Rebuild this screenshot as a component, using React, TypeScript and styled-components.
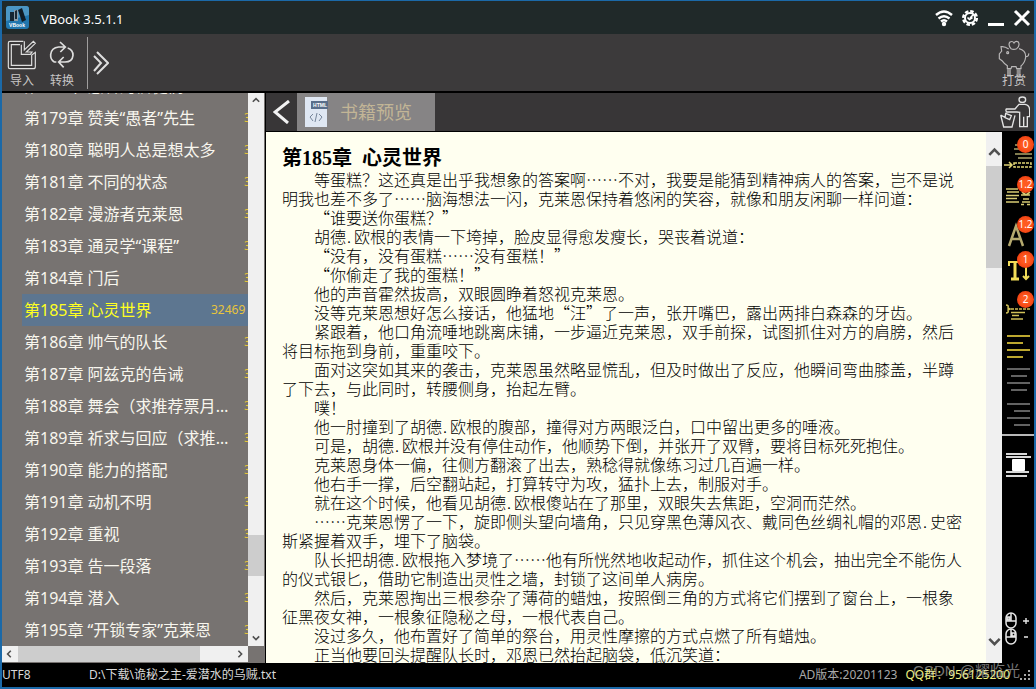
import React from "react";
import styled, { createGlobalStyle, css } from "styled-components";

const UI = '"Noto Sans", "Noto Sans CJK SC", sans-serif';

const GlobalStyle = createGlobalStyle`
  * { box-sizing: border-box; }
  body { margin: 0; background: #000; font-family: ${UI}; }
  button { padding: 0; border: 0; background: none; color: inherit; font: inherit; cursor: pointer; }
  svg { display: block; flex: none; }
`;

const Window = styled.div`
  height: 100vh;
  display: flex;
  flex-direction: column;
  border: 2px solid #1b69a8;
  border-top-width: 1px;
  background: #000;
  overflow: hidden;
`;

const TitleBar = styled.header`
  flex: none;
  height: 33px;
  display: flex;
  align-items: center;
  gap: 12px;
  padding: 0 3px 0 4px;
  background: #202929;
  color: #fff;
`;

const AppName = styled.h1`
  flex: 1;
  margin: 0;
  font-size: 13px;
  line-height: 20px;
  font-weight: 400;
  padding-top: 2px;
`;

const WindowButtons = styled.div`
  display: flex;
  align-items: center;
  gap: 8px;
`;

const Toolbar = styled.div`
  flex: none;
  height: 58px;
  display: flex;
  align-items: flex-start;
  background: #3c3a3b;
  border-bottom: 1px solid #000;
  color: #c8c6c6;
`;

const ToolButton = styled.button`
  width: 40px;
  padding-top: 6px;
  display: flex;
  flex-direction: column;
  align-items: center;
  gap: 3px;
  font-size: 12px;
  line-height: 16px;
`;

const MoreButton = styled.button`
  height: 52px;
  margin: 3px 0 0 5px;
  padding: 0 5px;
  border-left: 1px solid #a09e9e;
`;

const Spacer = styled.div`
  flex: 1;
`;

const DonateButton = styled(ToolButton)`
  position: relative;
  width: 40px;
`;

const DonateLabel = styled.span`
  position: absolute;
  left: 0;
  right: 0;
  top: 39px;
  text-align: center;
  font-size: 12px;
`;

const Body = styled.div`
  flex: 1;
  min-height: 0;
  display: flex;
`;

const Sidebar = styled.aside`
  flex: none;
  width: 264px;
  display: grid;
  grid-template-columns: 1fr 16px;
  grid-template-rows: 1fr 16px;
  padding: 0 1px 1px 0;
  background: #777371;
  border-right: 1px solid #000;
  border-top: 1px solid #000;
`;

const ListViewport = styled.nav`
  min-height: 0;
  min-width: 0;
  overflow: hidden;
`;

const ChapterList = styled.ul`
  list-style: none;
  margin: -23px 0 0 20px;
  padding: 0;
`;

const Chapter = styled.button<{ $active?: boolean }>`
  width: 100%;
  height: 32px;
  display: flex;
  align-items: center;
  padding-left: 2px;
  text-align: left;
  white-space: nowrap;
  font-size: 16px;
  line-height: 32px;
  color: #f8f6ee;
  ${(p) => p.$active && css`background: #5d7690; color: #ffff20;`}
`;

const ChapterName = styled.span<{ $active?: boolean }>`
  flex: none;
  width: ${(p) => (p.$active ? 187 : 206)}px;
  margin-right: ${(p) => (p.$active ? 0 : 14)}px;
  overflow: hidden;
  text-overflow: ellipsis;
`;

const Count = styled.span`
  flex: none;
  font-size: 12px;
  color: #e8c43c;
`;

const ScrollBar = styled.div<{ $horizontal?: boolean }>`
  flex: none;
  display: flex;
  flex-direction: ${(p) => (p.$horizontal ? "row" : "column")};
  ${(p) => (p.$horizontal ? "" : `width: 16px;`)}
  min-height: 0;
  background: #f0f0f0;
  color: #555;
`;

const ScrollArrow = styled.button<{ $tall?: boolean }>`
  flex: none;
  width: 16px;
  height: ${(p) => (p.$tall ? 34 : 16)}px;
  display: flex;
  align-items: center;
  justify-content: center;
  ${(p) => p.$tall && css`padding-top: 8px;`}
`;

const Track = styled.div<{ $before: number; $size: number; $after: number; $horizontal?: boolean }>`
  flex: 1;
  min-height: 0;
  display: grid;
  ${(p) =>
    p.$horizontal
      ? `grid-template-columns: ${p.$before}fr ${p.$size}fr ${p.$after}fr;`
      : `grid-template-rows: ${p.$before}fr ${p.$size}fr ${p.$after}fr;`}
`;

const Thumb = styled.div<{ $horizontal?: boolean }>`
  ${(p) => (p.$horizontal ? "grid-column: 2;" : "grid-row: 2;")}
  background: #cdcdcd;
`;

const Main = styled.main`
  flex: 1;
  min-width: 0;
  display: flex;
  flex-direction: column;
`;

const TabBar = styled.div`
  flex: none;
  height: 40px;
  display: flex;
  background: #383637;
  border-bottom: 1px solid #000;
  border-top: 1px solid #000;
`;

const BackButton = styled.button`
  width: 31px;
  display: flex;
  align-items: center;
  justify-content: center;
`;

const Tab = styled.button`
  width: 138px;
  display: flex;
  align-items: center;
  gap: 12px;
  padding-left: 8px;
  background: #868485;
  color: #c2b596;
  font-size: 18px;
  line-height: 24px;
`;

const TrashButton = styled.button`
  width: 38px;
  display: flex;
  align-items: center;
  justify-content: center;
`;

const Workspace = styled.div`
  flex: 1;
  min-height: 0;
  display: flex;
`;

const Paper = styled.article`
  flex: 1;
  min-width: 0;
  overflow: hidden;
  padding: 14px 20px 0 16px;
  background: #fffff0;
  color: #000;
  font-family: "Noto Sans CJK SC", sans-serif;
  font-weight: 300;
  text-spacing-trim: space-all;
`;

const ChapterTitle = styled.h2`
  margin: 0;
  font-family: "Liberation Serif", "Noto Sans CJK SC", serif;
  font-size: 20px;
  line-height: 24px;
  font-weight: 700;
  white-space: pre;
`;

const Paragraph = styled.p`
  margin: 0;
  text-indent: 32px;
  font-size: 16px;
  line-height: 19px;
`;

const Dot = styled.span`
  display: inline-block;
  width: 8px;
  text-indent: 1px;
`;

const Tools = styled.div`
  flex: none;
  width: 32px;
  display: flex;
  flex-direction: column;
  align-items: center;
  background: #000;
`;

const SideTool = styled.button<{ $height: number }>`
  position: relative;
  flex: none;
  width: 32px;
  height: ${(p) => p.$height}px;
`;

const Badge = styled.span`
  position: absolute;
  top: 4px;
  left: 15px;
  width: 17px;
  height: 17px;
  border-radius: 50%;
  background: radial-gradient(#ff5a20 30%, #e83208);
  color: #fff;
  font-size: 10px;
  line-height: 17px;
  text-align: center;
`;

const Divider = styled.hr`
  width: 100%;
  height: 2px;
  margin: 0;
  border: 0;
  background: #b8b8b8;
`;

const StatusBar = styled.footer`
  position: relative;
  flex: none;
  height: 24px;
  display: flex;
  align-items: center;
  background: #000;
  color: #d8d8d8;
  font-size: 12px;
  line-height: 24px;
  white-space: nowrap;
`;

const Encoding = styled.span`
  width: 87px;
`;

const FilePath = styled.span`
  flex: 1;
`;

const Version = styled.span`
  color: #a8a8a8;
  margin-right: 8px;
`;

const Group = styled.span`
  color: #f0f080;
  margin-right: 10px;
`;

const Watermark = styled.span`
  position: absolute;
  right: 14px;
  top: -4px;
  font-family: "Liberation Sans", "Noto Sans CJK SC", sans-serif;
  font-size: 15px;
  color: rgba(200, 200, 200, 0.6);
`;

type ChapterItem = [number, string];
const chapters: ChapterItem[] = [
  [178, "愚者的信徒们"],
  [179, "赞美“愚者”先生"],
  [180, "聪明人总是想太多"],
  [181, "不同的状态"],
  [182, "漫游者克莱恩"],
  [183, "通灵学“课程”"],
  [184, "门后"],
  [185, "心灵世界"],
  [186, "帅气的队长"],
  [187, "阿兹克的告诫"],
  [188, "舞会（求推荐票月票）"],
  [189, "祈求与回应（求推荐票）"],
  [190, "能力的搭配"],
  [191, "动机不明"],
  [192, "重视"],
  [193, "告一段落"],
  [194, "潜入"],
  [195, "“开锁专家”克莱恩"],
];

const paragraphs = [
  "等蛋糕？这还真是出乎我想象的答案啊……不对，我要是能猜到精神病人的答案，岂不是说明我也差不多了……脑海想法一闪，克莱恩保持着悠闲的笑容，就像和朋友闲聊一样问道：",
  "“谁要送你蛋糕？”",
  "胡德.欧根的表情一下垮掉，脸皮显得愈发瘦长，哭丧着说道：",
  "“没有，没有蛋糕……没有蛋糕！”",
  "“你偷走了我的蛋糕！”",
  "他的声音霍然拔高，双眼圆睁着怒视克莱恩。",
  "没等克莱恩想好怎么接话，他猛地“汪”了一声，张开嘴巴，露出两排白森森的牙齿。",
  "紧跟着，他口角流唾地跳离床铺，一步逼近克莱恩，双手前探，试图抓住对方的肩膀，然后将目标拖到身前，重重咬下。",
  "面对这突如其来的袭击，克莱恩虽然略显慌乱，但及时做出了反应，他瞬间弯曲膝盖，半蹲了下去，与此同时，转腰侧身，抬起左臂。",
  "噗！",
  "他一肘撞到了胡德.欧根的腹部，撞得对方两眼泛白，口中留出更多的唾液。",
  "可是，胡德.欧根并没有停住动作，他顺势下倒，并张开了双臂，要将目标死死抱住。",
  "克莱恩身体一偏，往侧方翻滚了出去，熟稔得就像练习过几百遍一样。",
  "他右手一撑，后空翻站起，打算转守为攻，猛扑上去，制服对手。",
  "就在这个时候，他看见胡德.欧根傻站在了那里，双眼失去焦距，空洞而茫然。",
  "……克莱恩愣了一下，旋即侧头望向墙角，只见穿黑色薄风衣、戴同色丝绸礼帽的邓恩.史密斯紧握着双手，埋下了脑袋。",
  "队长把胡德.欧根拖入梦境了……他有所恍然地收起动作，抓住这个机会，抽出完全不能伤人的仪式银匕，借助它制造出灵性之墙，封锁了这间单人病房。",
  "然后，克莱恩掏出三根参杂了薄荷的蜡烛，按照倒三角的方式将它们摆到了窗台上，一根象征黑夜女神，一根象征隐秘之母，一根代表自己。",
  "没过多久，他布置好了简单的祭台，用灵性摩擦的方式点燃了所有蜡烛。",
  "正当他要回头提醒队长时，邓恩已然抬起脑袋，低沉笑道：",
];

const Chevron = ({ dir, size = 8 }: { dir: "up" | "down" | "left" | "right"; size?: number }) => {
  const d = { up: "M1 6 5 2 9 6", down: "M1 3 5 7 9 3", left: "M6 1 2 5 6 9", right: "M3 1 7 5 3 9" }[dir];
  return (
    <svg width={size} height={size} viewBox="0 0 10 10" fill="none" stroke="#505050" strokeWidth="2">
      <path d={d} />
    </svg>
  );
};

const Logo = () => (
  <svg width="23" height="23" viewBox="0 0 23 23">
    <rect width="23" height="23" rx="3" fill="#2176ae" />
    <path d="M0 3Q0 0 3 0H20Q23 0 23 3V9L0 15Z" fill="#4b96c4" />
    <path d="M4 6H8V15H4Z" fill="#162632" />
    <path d="M8 4H12V15H8Z" fill="#8b9ba6" />
    <path d="m12 4 4-2 4 12-4 2Z" fill="#101c26" />
    <path d="m9 5 2-1v9H9Z" fill="#1a2934" />
    <text x="11" y="21" textAnchor="middle" fontSize="5" fontWeight="700" fontFamily="Liberation Sans, sans-serif" fill="#fff">VBook</text>
  </svg>
);

const ImportIcon = () => (
  <svg width="30" height="30" viewBox="21 120 90 90" fill="none" stroke="#dedede" strokeWidth="3.5">
    <path d="M70 124H30Q25 124 25 129V201Q25 206 30 206H100Q106 206 106 200V157L95 165V196H34V134H60" />
    <path d="M64 134V163H91L96 156H79L106 130 100 124 73 150V124" />
  </svg>
);

const ConvertIcon = () => (
  <svg width="30" height="30" viewBox="144 121 90 90" fill="none" stroke="#dedede" strokeWidth="5">
    <path d="M172 187H166Q154 180 155 165 157 144 179 142H198M183 127 199 142 184 157" />
    <path d="M206 145Q222 150 222 167 220 187 198 187H180M194 172 179 187 194 203" />
  </svg>
);

const DoubleArrow = () => (
  <svg width="16" height="26" viewBox="0 0 16 26" fill="none" stroke="#dedede" strokeWidth="2">
    <path d="m1 6 7 7-7 8M4 2l11 11L4 24" />
  </svg>
);

const PigIcon = () => (
  <svg width="32" height="38" viewBox="294 118 96 114" fill="none" stroke="#b9b7b7" strokeWidth="3.5">
    <path d="M326 145Q314 136 303 138L305 151 298 160V174L306 180Q313 190 322 195V204H333L335 198H348L350 204H363V196Q375 186 377 169 378 149 357 144M377 168Q387 168 386 158" />
    <path d="M333 144Q323 132 330 124 338 120 342 127 347 119 355 124 361 135 350 144Q341 148 333 144Z" />
    <circle cx="323" cy="156" r="3" />
    <path d="M327 205V228M356 205V228" stroke="#908e8e" strokeWidth="12" />
  </svg>
);

const WifiIcon = () => (
  <svg width="18" height="18" viewBox="0 0 18 18" fill="none" stroke="#fff" strokeWidth="2.4">
    <path d="M1 6Q9-1 17 6M3.500 9.500Q9 5 14.500 9.500M6 12.500Q9 10 12 12.500" />
    <circle cx="9" cy="15" r="2.2" fill="#fff" stroke="none" />
  </svg>
);

const GearIcon = () => (
  <svg width="18" height="18" viewBox="0 0 18 18" fill="none" stroke="#fff">
    <circle cx="9" cy="9" r="6.8" strokeWidth="2.5" strokeDasharray="3.5 1.84" />
    <circle cx="9" cy="9" r="5" strokeWidth="2" />
    <path d="M13 5 9 9M6.500 8.500l2 2 3-2" strokeWidth="1.7" />
  </svg>
);

const MinimizeIcon = () => (
  <svg width="18" height="18" viewBox="0 0 18 18"><path d="M1 14H17V17H1Z" fill="#fff" /></svg>
);

const CloseIcon = () => (
  <svg width="18" height="18" viewBox="0 0 18 18" stroke="#fff" strokeWidth="3"><path d="m2 2 14 14M16 2 2 16" /></svg>
);

const BackIcon = () => (
  <svg width="18" height="24" viewBox="0 0 18 24" fill="none" stroke="#f2f2f2" strokeWidth="3">
    <path d="M16 1 2 12 15 23" />
  </svg>
);

const HtmlIcon = () => (
  <svg width="23" height="30" viewBox="0 0 23 30">
    <path d="M0 0H22V30H0Z" fill="#dfe7f3" />
    <path d="M6 4H23V12H6Z" fill="#596e8a" />
    <text x="15" y="10" textAnchor="middle" fontSize="5" fontWeight="700" fontFamily="Liberation Sans, sans-serif" fill="#fff">HTML</text>
    <path d="m8 17-3 3 3 4m6-7 3 3-3 4m-2-8-2 9" fill="none" stroke="#76869b" />
  </svg>
);

const TrashIcon = () => (
  <svg width="30" height="32" viewBox="299 286 90 96" fill="none" stroke="#e3e3e3" strokeWidth="4">
    <ellipse cx="366" cy="297" rx="10" ry="8" />
    <path d="M318 325H344L356 311H374Q387 313 388 327V348H381V378H358V335L350 334H319Q315 329 318 325Z" />
    <path d="M301 343 310 379H335L344 344M301 343 314 350M316 338 333 345 328 357 314 351Z" />
    <path d="M370 348V378" />
  </svg>
);

const FirstLineIcon = () => (
  <svg width="32" height="40" viewBox="0 0 32 40" fill="none" stroke="#e0d474" strokeWidth="1.5">
    <path d="M13 13H17M12 17H17M13 22H30M16 26H30" stroke="#aaa46a" />
    <path d="M2 33H9M7 30l3 3-3 3" />
    <path d="M12 31H29V35H12Z" strokeDasharray="3 1" />
  </svg>
);

const SpacingIcon = () => (
  <svg width="32" height="40" viewBox="0 0 32 40" fill="none" stroke="#d8cc74" strokeWidth="1.6">
    <path d="M4 17H16M5 20H17M4 23.500H17M4 26.500H15M4 30H17M19 23H28M20 30H28M19 32.500H22M25 32.500H28M20 20l4 3 4-3M21 27H27" />
  </svg>
);

const LetterIcon = () => (
  <svg width="32" height="35" viewBox="0 0 32 35" fill="none" stroke="#b5a96e" strokeWidth="2.5">
    <path d="M7 34 14 14 21 34M9 27H19" />
  </svg>
);

const TextHeightIcon = () => (
  <svg width="32" height="40" viewBox="0 0 32 40" fill="none" stroke="#f0dc58">
    <path d="M13 15V31M9 32H17" strokeWidth="3" />
    <path d="M7 19V15H20V19" strokeWidth="2" />
    <path d="M24 18V32M21 29l3 3 3-3" strokeWidth="2" />
  </svg>
);

const ParagraphIcon = () => (
  <svg width="32" height="38" viewBox="0 0 32 38" fill="none" stroke="#d0c058" strokeWidth="1.5">
    <path d="M4 15Q7 15 6 18L8 19 6 20Q7 23 4 23" />
    <path d="M9 19H28" strokeDasharray="3 1" />
    <path d="M9 22.500H23M10 25.500H17M9 29H21" />
  </svg>
);

const AlignIcon = ({ kind }: { kind: "left" | "center" | "right" }) => {
  const x = { left: 5, center: 9, right: 12 }[kind];
  return (
    <svg width="32" height="33" viewBox="0 0 32 33" stroke={kind === "left" ? "#bda82f" : "#626262"} strokeWidth="2">
      <path d={`M5 5H28M${x} 12h16M5 19H28M${x} 26h16`} />
    </svg>
  );
};

const ImageAlignIcon = () => (
  <svg width="32" height="54" viewBox="0 0 32 54">
    <path d="M4 18H25M4 21H29M4 36H27M4 40H25" stroke="#d8d8d8" strokeWidth="2" />
    <rect x="10" y="23" width="13" height="12" rx="1" fill="#fff" />
  </svg>
);

const MouseIcon = () => (
  <svg width="32" height="48" viewBox="0 0 32 48" fill="none" stroke="#e6e6e6" strokeWidth="1.5">
    <rect x="4" y="2" width="10" height="15" rx="5" />
    <path d="M4 10H14M9 2V10" />
    <path d="M5 6H8V9H5Z" fill="#aaa" />
    <rect x="4" y="18" width="10" height="15" rx="5" />
    <path d="M4 26H14M9 18V26M10 22H13V25H10Z" />
    <path d="M21 10H27M24 7V13M22 26H26" strokeWidth="1.4" />
  </svg>
);

const GripIcon = () => (
  <svg width="14" height="14" viewBox="0 0 14 14" fill="#a8a8a8">
    <path d="M8 2h2v2H8zM8 6h2v2H8zM8 10h2v2H8zM4 6h2v2H4zM4 10h2v2H4zM0 10h2v2H0z" />
  </svg>
);

const sideTools = [
  { label: "段首缩进", icon: <FirstLineIcon />, badge: "0", height: 40 },
  { label: "段间距", icon: <SpacingIcon />, badge: "1.2", height: 40 },
  { label: "字体", icon: <LetterIcon />, badge: "1.2", height: 35 },
  { label: "字高", icon: <TextHeightIcon />, badge: "1", height: 40 },
  { label: "段落", icon: <ParagraphIcon />, badge: "2", height: 44 },
  { label: "左对齐", icon: <AlignIcon kind="left" />, height: 33 },
  { label: "居中", icon: <AlignIcon kind="center" />, height: 33 },
  { label: "右对齐", icon: <AlignIcon kind="right" />, height: 37 },
];

const withDots = (text: string) =>
  text.split(".").map((part, i) => (
    <React.Fragment key={i}>
      {i > 0 && <Dot>.</Dot>}
      {part}
    </React.Fragment>
  ));

export default function App() {
  return (
    <Window>
      <GlobalStyle />
      <TitleBar>
        <Logo />
        <AppName>VBook 3.5.1.1</AppName>
        <WindowButtons>
          <button aria-label="网络"><WifiIcon /></button>
          <button aria-label="设置"><GearIcon /></button>
          <button aria-label="最小化"><MinimizeIcon /></button>
          <button aria-label="关闭"><CloseIcon /></button>
        </WindowButtons>
      </TitleBar>
      <Toolbar>
        <ToolButton><ImportIcon />导入</ToolButton>
        <ToolButton><ConvertIcon />转换</ToolButton>
        <MoreButton aria-label="更多"><DoubleArrow /></MoreButton>
        <Spacer />
        <DonateButton>
          <PigIcon />
          <DonateLabel>打赏</DonateLabel>
        </DonateButton>
      </Toolbar>
      <Body>
        <Sidebar>
          <ListViewport aria-label="章节">
            <ChapterList>
              {chapters.map(([n, name]) => (
                <li key={n}>
                  <Chapter $active={n === 185}>
                    <ChapterName $active={n === 185}>{`第${n}章 ${name}`}</ChapterName>
                    <Count>{n === 185 ? "32469" : "3"}</Count>
                  </Chapter>
                </li>
              ))}
            </ChapterList>
          </ListViewport>
          <ScrollBar>
            <ScrollArrow aria-label="向上"><Chevron dir="up" /></ScrollArrow>
            <Track $before={425} $size={41} $after={54}><Thumb /></Track>
            <ScrollArrow aria-label="向下"><Chevron dir="down" /></ScrollArrow>
          </ScrollBar>
          <ScrollBar $horizontal>
            <ScrollArrow aria-label="向左"><Chevron dir="left" /></ScrollArrow>
            <Track $before={0} $size={182} $after={32} $horizontal><Thumb $horizontal /></Track>
            <ScrollArrow aria-label="向右"><Chevron dir="right" /></ScrollArrow>
          </ScrollBar>
        </Sidebar>
        <Main>
          <TabBar>
            <BackButton aria-label="返回"><BackIcon /></BackButton>
            <Tab><HtmlIcon />书籍预览</Tab>
            <Spacer />
            <TrashButton aria-label="清空"><TrashIcon /></TrashButton>
          </TabBar>
          <Workspace>
            <Paper>
              <ChapterTitle>{"第185章  心灵世界"}</ChapterTitle>
              {paragraphs.map((p) => <Paragraph key={p}>{withDots(p)}</Paragraph>)}
            </Paper>
            <ScrollBar>
              <ScrollArrow $tall aria-label="向上"><Chevron dir="up" size={13} /></ScrollArrow>
              <Track $before={0} $size={101} $after={362}><Thumb /></Track>
              <ScrollArrow aria-label="向下"><Chevron dir="down" size={13} /></ScrollArrow>
              <ScrollGap />
            </ScrollBar>
            <Tools>
              {sideTools.map((t) => (
                <SideTool key={t.label} aria-label={t.label} $height={t.height}>
                  {t.icon}
                  {t.badge && <Badge>{t.badge}</Badge>}
                </SideTool>
              ))}
              <Divider />
              <SideTool aria-label="图片对齐" $height={54}><ImageAlignIcon /></SideTool>
              <Spacer />
              <SideTool aria-label="滚轮缩放" $height={57}><MouseIcon /></SideTool>
            </Tools>
          </Workspace>
        </Main>
      </Body>
      <StatusBar>
        <Encoding>UTF8</Encoding>
        <FilePath>D:\下载\诡秘之主-爱潜水的乌贼.txt</FilePath>
        <Version>AD版本:20201123</Version>
        <Group>QQ群：956125200</Group>
        <GripIcon />
        <Watermark>CSDN @耀临光</Watermark>
      </StatusBar>
    </Window>
  );
}

const ScrollGap = styled.div`
  flex: none;
  height: 14px;
`;
